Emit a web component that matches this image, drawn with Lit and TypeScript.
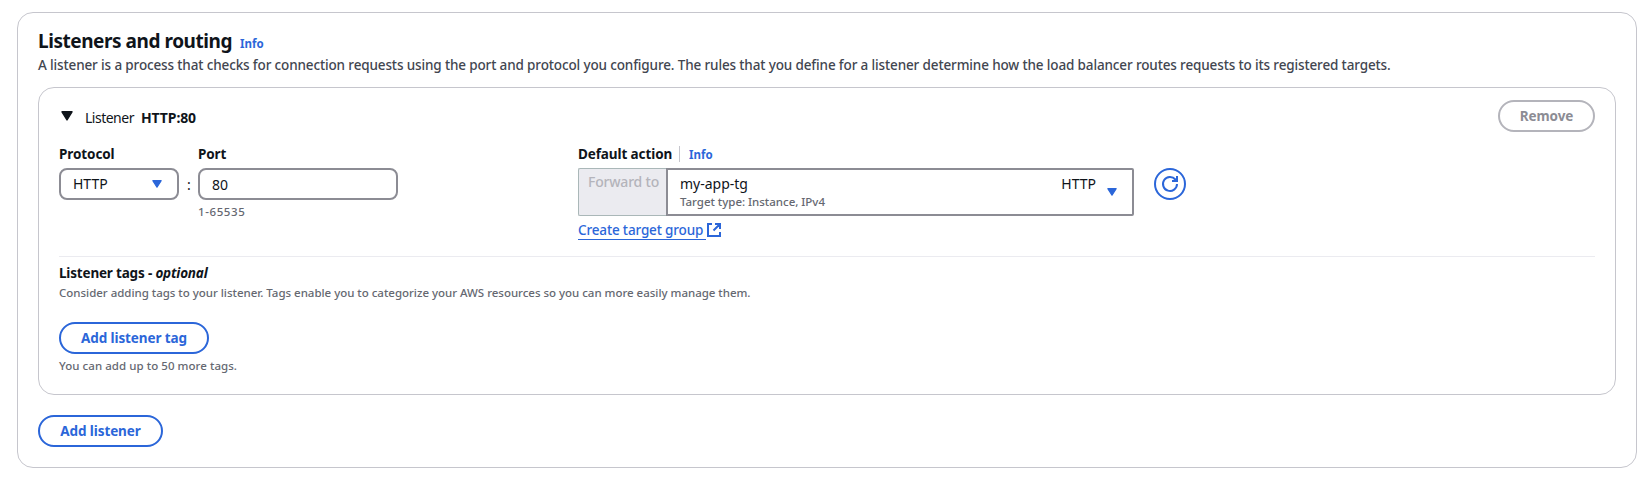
import { LitElement, html, css } from "lit";
import { customElement } from "lit/decorators.js";

@customElement("app-root")
export class AppRoot extends LitElement {
  static styles = css`
    :host { display: block; box-sizing: border-box; height: 482px; padding: 12px 13px 14px 17px; background: #fff; color: #0f141a; font: 14px/20px "Noto Sans", "Open Sans", sans-serif; overflow: hidden; }
    * { box-sizing: border-box; }
    svg { display: block; flex: none; }
    .panel { width: 1620px; height: 456px; border: 1px solid #c6c6cd; border-radius: 16px; padding: 16px 20px 0; white-space: nowrap; }
    .title { display: flex; height: 24px; align-items: baseline; }
    h2 { margin: 0; font-size: 19px; line-height: 24px; font-weight: 700; letter-spacing: -0.45px; width: 202px; }
    .info { color: #2b66d9; font-size: 11.5px; line-height: 16px; font-weight: 700; letter-spacing: 0; }
    .desc { margin-top: 2px; color: #424650; font-size: 13.5px; font-weight: 500; letter-spacing: -0.135px; }
    .card { width: 1578px; height: 308px; margin-top: 12px; border: 1px solid #c6c6cd; border-radius: 16px; padding: 12px 20px 0; }
    .head { display: flex; height: 32px; align-items: center; }
    .caret { margin: 0 12px 0 2px; }
    .name { padding-top: 4px; letter-spacing: -0.5px; margin-right: 7px; }
    .value { padding-top: 4px; font-weight: 700; letter-spacing: -0.1px; }
    .btn { display: inline-flex; align-items: center; justify-content: center; height: 32px; border: 2px solid #2b66d9; border-radius: 16px; background: #fff; color: #2b66d9; font: 700 13.5px/20px "Noto Sans", sans-serif; letter-spacing: -0.1px; padding: 0; }
    .remove { margin-left: auto; width: 97px; border-color: #b4b4bb; color: #8c8c94; }
    .fields { display: flex; height: 112px; margin-top: 12px; }
    .label { font-weight: 700; font-size: 13.5px; height: 20px; margin-bottom: 4px; letter-spacing: -0.1px; }
    .protocol { width: 120px; }
    .box { display: flex; align-items: center; height: 32px; border: 2px solid #8c8c94; border-radius: 8px; padding: 0 15px 0 12px; }
    .box .v { flex: 1; }
    .colon { width: 19px; padding: 31px 0 0 1px; text-align: center; }
    .port { width: 200px; margin-right: 180px; }
    .port .v { padding-top: 1px; }
    .small { font-size: 11.5px; line-height: 16px; font-weight: 500; color: #656871; letter-spacing: -0.02px; }
    .hint { margin-top: 4px; letter-spacing: 0.6px; }
    .action { width: 556px; }
    .alabel { display: flex; height: 20px; margin-bottom: 4px; align-items: center; }
    .alabel .label { margin: 0; width: 101px; }
    .alabel .info { border-left: 1px solid #c6c6cd; padding-left: 9px; height: 16px; line-height: 18px; }
    .target { display: flex; height: 48px; }
    .forward { width: 88px; border: 1px solid #aab7b8; border-right: 0; border-radius: 2px 0 0 2px; background: #ebebf0; color: #b4b4bb; font-weight: 500; letter-spacing: -0.2px; padding: 3px 0 0 9px; }
    .select { flex: 1; display: flex; border: 2px solid #8c8c94; border-radius: 0 2px 2px 0; padding: 4px 15px 0 12px; }
    .texts { flex: 1; }
    .down { margin: 14px 0 0 11px; }
    .link { display: flex; margin-top: 4px; height: 20px; color: #2b66d9; }
    .link .t { width: 128px; height: 20px; border-bottom: 1px solid #2b66d9; font-size: 13.5px; font-weight: 500; letter-spacing: -0.15px; }
    .link svg { margin: 3px 0 0 1px; }
    .refresh { width: 32px; margin: 24px 0 0 20px; }
    .tags { border-top: 1px solid #ebebf0; padding-top: 6px; }
    .tags .label { margin-bottom: 2px; letter-spacing: -0.18px; }
    .tagbtn { width: 150px; margin-top: 21px; }
    .limit { margin-top: 4px; letter-spacing: 0.05px; }
    .add { width: 125px; margin-top: 20px; }
  `;

  caret(w: number, h: number, c: string, cls = "") {
    return html`<svg class=${cls} width=${w} height=${h} viewBox="0 0 12 10" preserveAspectRatio="none"><path d="M1 .8h10L6 9z" fill=${c} stroke=${c} stroke-width="1.4" stroke-linejoin="round"/></svg>`;
  }

  render() {
    return html`
      <section class="panel">
        <div class="title"><h2>Listeners and routing</h2><span class="info">Info</span></div>
        <div class="desc"><span>A listener is a process that checks for connection requests using the port and protocol you configure. The rules that you define for a listener determine how the load balancer routes requests to its registered targets.</span></div>
        <div class="card">
          <div class="head">
            ${this.caret(12, 10, "#0f141a", "caret")}
            <span class="name">Listener</span><span class="value">HTTP:80</span>
            <button class="btn remove">Remove</button>
          </div>
          <div class="fields">
            <div class="protocol">
              <div class="label">Protocol</div>
              <div class="box"><span class="v">HTTP</span>${this.caret(10, 8, "#2b66d9")}</div>
            </div>
            <div class="colon">:</div>
            <div class="port">
              <div class="label">Port</div>
              <div class="box"><span class="v">80</span></div>
              <div class="small hint">1-65535</div>
            </div>
            <div class="action">
              <div class="alabel"><span class="label">Default action</span><span class="info">Info</span></div>
              <div class="target">
                <div class="forward">Forward to</div>
                <div class="select">
                  <div class="texts"><div>my-app-tg</div><div class="small">Target type: Instance, IPv4</div></div>
                  <span>HTTP</span>
                  ${this.caret(10, 8, "#2b66d9", "down")}
                </div>
              </div>
              <div class="link"><span class="t">Create target group</span>
                <svg width="14" height="14" viewBox="0 0 14 14" fill="none" stroke="#2b66d9" stroke-width="2"><path d="M5 1H1v12h12V9M8 1h5v5M13 1 6.5 7.5"/></svg>
              </div>
            </div>
            <div class="refresh">
              <svg width="32" height="32" viewBox="0 0 32 32" fill="none" stroke="#2b66d9" stroke-width="2"><circle cx="16" cy="16" r="15"/><path d="M23 16a7 7 0 1 1-1.6-4.5l1.2 1.5M23 8v5h-5"/></svg>
            </div>
          </div>
          <div class="tags">
            <div class="label">Listener tags - <i>optional</i></div>
            <div class="small">Consider adding tags to your listener. Tags enable you to categorize your AWS resources so you can more easily manage them.</div>
            <button class="btn tagbtn">Add listener tag</button>
            <div class="small limit">You can add up to 50 more tags.</div>
          </div>
        </div>
        <button class="btn add">Add listener</button>
      </section>
    `;
  }
}
